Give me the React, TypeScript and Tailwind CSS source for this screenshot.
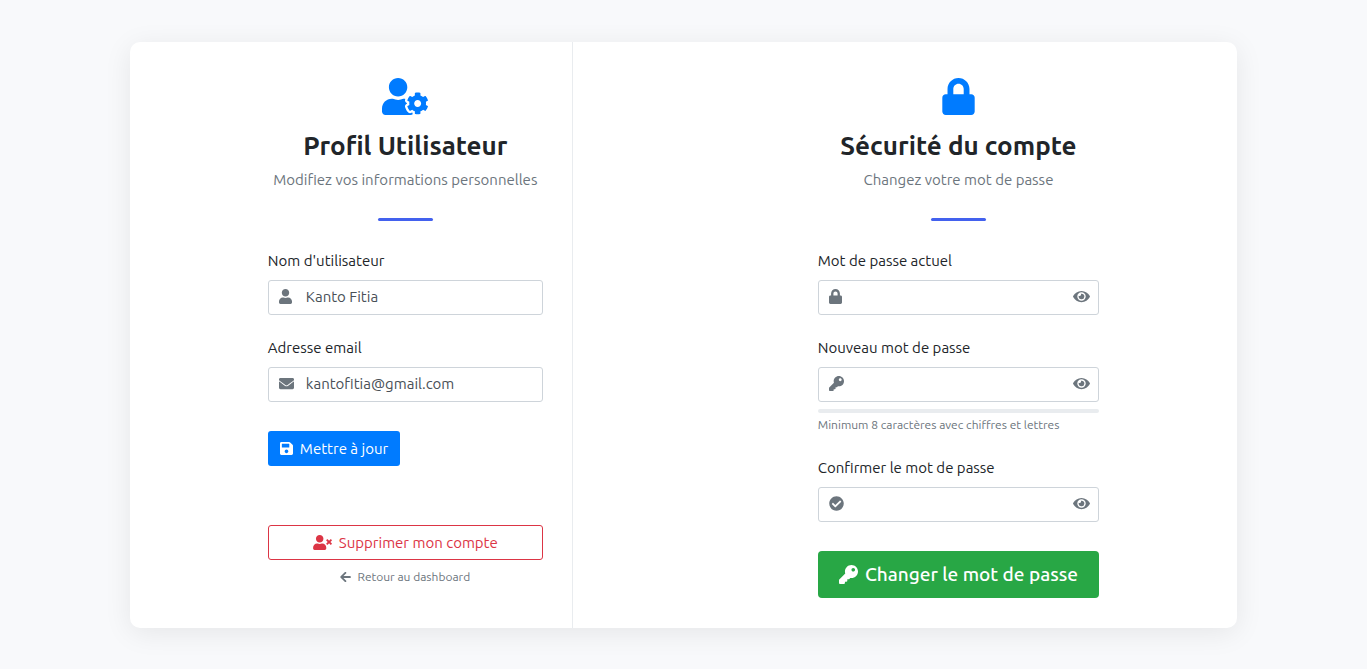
import { useState } from 'react';
import type { ReactNode } from 'react';
import type { IconType } from 'react-icons';
import {
  FaArrowLeft,
  FaCheckCircle,
  FaEnvelope,
  FaEye,
  FaEyeSlash,
  FaKey,
  FaLock,
  FaSave,
  FaUser,
  FaUserCog,
  FaUserTimes,
} from 'react-icons/fa';

function PanelHeader({ icon, title, subtitle }: { icon: ReactNode; title: string; subtitle: string }) {
  return (
    <header className="flex flex-col items-center text-center">
      <div className="text-[#007bff]">{icon}</div>
      <h2 className="mt-[15px] text-[26px] leading-8 font-bold whitespace-nowrap text-[#212529]">{title}</h2>
      <p className="mt-[7px] text-[15px] leading-[22px] whitespace-nowrap text-[#6c757d]">{subtitle}</p>
      <div className="mt-[27px] h-[3px] w-[55px] rounded-full bg-[#4361ee]" />
    </header>
  );
}

interface FieldProps {
  id: string;
  label: string;
  icon: IconType;
  narrowIcon?: boolean;
  type?: string;
  value?: string;
}

function Field({ id, label, icon: Icon, narrowIcon = false, type = 'text', value = '' }: FieldProps) {
  const [text, setText] = useState(value);
  const [visible, setVisible] = useState(false);
  const secret = type === 'password';
  const Eye = visible ? FaEyeSlash : FaEye;

  return (
    <div>
      <label htmlFor={id} className="mb-2 block text-[15px] leading-[22px] text-[#212529]">
        {label}
      </label>
      <div className="flex h-[35px] items-center rounded-[3px] border border-[#ced4da] bg-white pr-2 pb-px pl-2.5 text-[#6c757d] focus-within:border-[#80bdff]">
        <span className="flex w-[27px] shrink-0">
          <Icon className={narrowIcon ? 'h-[15px] w-[13px]' : 'h-[15px] w-[15px]'} />
        </span>
        <input
          id={id}
          type={secret && visible ? 'text' : type}
          value={text}
          onChange={(e) => setText(e.target.value)}
          className="min-w-0 flex-1 bg-transparent text-[15px] leading-[22px] text-[#495057] outline-none"
        />
        {secret && (
          <button type="button" aria-label="Afficher le mot de passe" onClick={() => setVisible(!visible)}>
            <Eye className="h-[15px] w-[17px]" />
          </button>
        )}
      </div>
    </div>
  );
}

export default function App() {
  return (
    <main className="flex min-h-screen items-center justify-center bg-[#f8f9fb] font-['Ubuntu','Noto_Sans',sans-serif]">
      <div className="grid w-[81%] grid-cols-[2fr_3fr] rounded-[10px] bg-white shadow-[0_5px_28px_rgba(0,0,0,0.08)]">
        <section className="border-r border-[#e9ecef] pt-9 pr-[29px] pb-[42px] pl-[138px]">
          <PanelHeader
            icon={<FaUserCog className="h-[37px] w-[46px]" />}
            title="Profil Utilisateur"
            subtitle="Modifiez vos informations personnelles"
          />
          <form className="mt-[29px] flex flex-col gap-[22px]" onSubmit={(e) => e.preventDefault()}>
            <Field id="username" label="Nom d'utilisateur" icon={FaUser} narrowIcon value="Kanto Fitia" />
            <Field id="email" label="Adresse email" icon={FaEnvelope} type="email" value="kantofitia@gmail.com" />
            <button
              type="submit"
              className="mt-[7px] flex h-[35px] items-center gap-[7px] self-start rounded-[3px] bg-[#007bff] px-3 text-[15px] leading-[22px] whitespace-nowrap text-white"
            >
              <FaSave className="h-[15px] w-[13px]" />
              <span className="pt-px">Mettre à jour</span>
            </button>
          </form>
          <button
            type="button"
            className="mt-[59px] flex h-[35px] w-full items-center justify-center gap-[7px] rounded-[3px] border border-[#dc3545] text-[15px] leading-[22px] whitespace-nowrap text-[#dc3545]"
          >
            <FaUserTimes className="h-[15px] w-[19px]" />
            <span className="pt-px">Supprimer mon compte</span>
          </button>
          <a
            href="#dashboard"
            className="mt-2 flex items-center justify-center gap-1.5 text-xs leading-[18px] text-[#6c757d]"
          >
            <FaArrowLeft className="h-3 w-[11px]" />
            Retour au dashboard
          </a>
        </section>

        <section className="pt-9 pr-[138px] pb-[30px] pl-[245px]">
          <PanelHeader
            icon={<FaLock className="h-[37px] w-[33px]" />}
            title="Sécurité du compte"
            subtitle="Changez votre mot de passe"
          />
          <form className="mt-[29px] flex flex-col gap-[22px]" onSubmit={(e) => e.preventDefault()}>
            <Field id="current-password" label="Mot de passe actuel" icon={FaLock} narrowIcon type="password" />
            <div>
              <Field id="new-password" label="Nouveau mot de passe" icon={FaKey} type="password" />
              <div className="mt-[7px] h-1 rounded-full bg-[#e9ecef]" />
              <p className="mt-[3px] mb-px text-xs leading-[18px] text-[#6c757d]">
                Minimum 8 caractères avec chiffres et lettres
              </p>
            </div>
            <Field id="confirm-password" label="Confirmer le mot de passe" icon={FaCheckCircle} type="password" />
            <button
              type="submit"
              className="mt-[7px] flex h-[47px] items-center justify-center gap-[7px] rounded bg-[#28a745] text-[19px] font-medium whitespace-nowrap text-white"
            >
              <FaKey className="h-[19px] w-[19px]" />
              Changer le mot de passe
            </button>
          </form>
        </section>
      </div>
    </main>
  );
}
